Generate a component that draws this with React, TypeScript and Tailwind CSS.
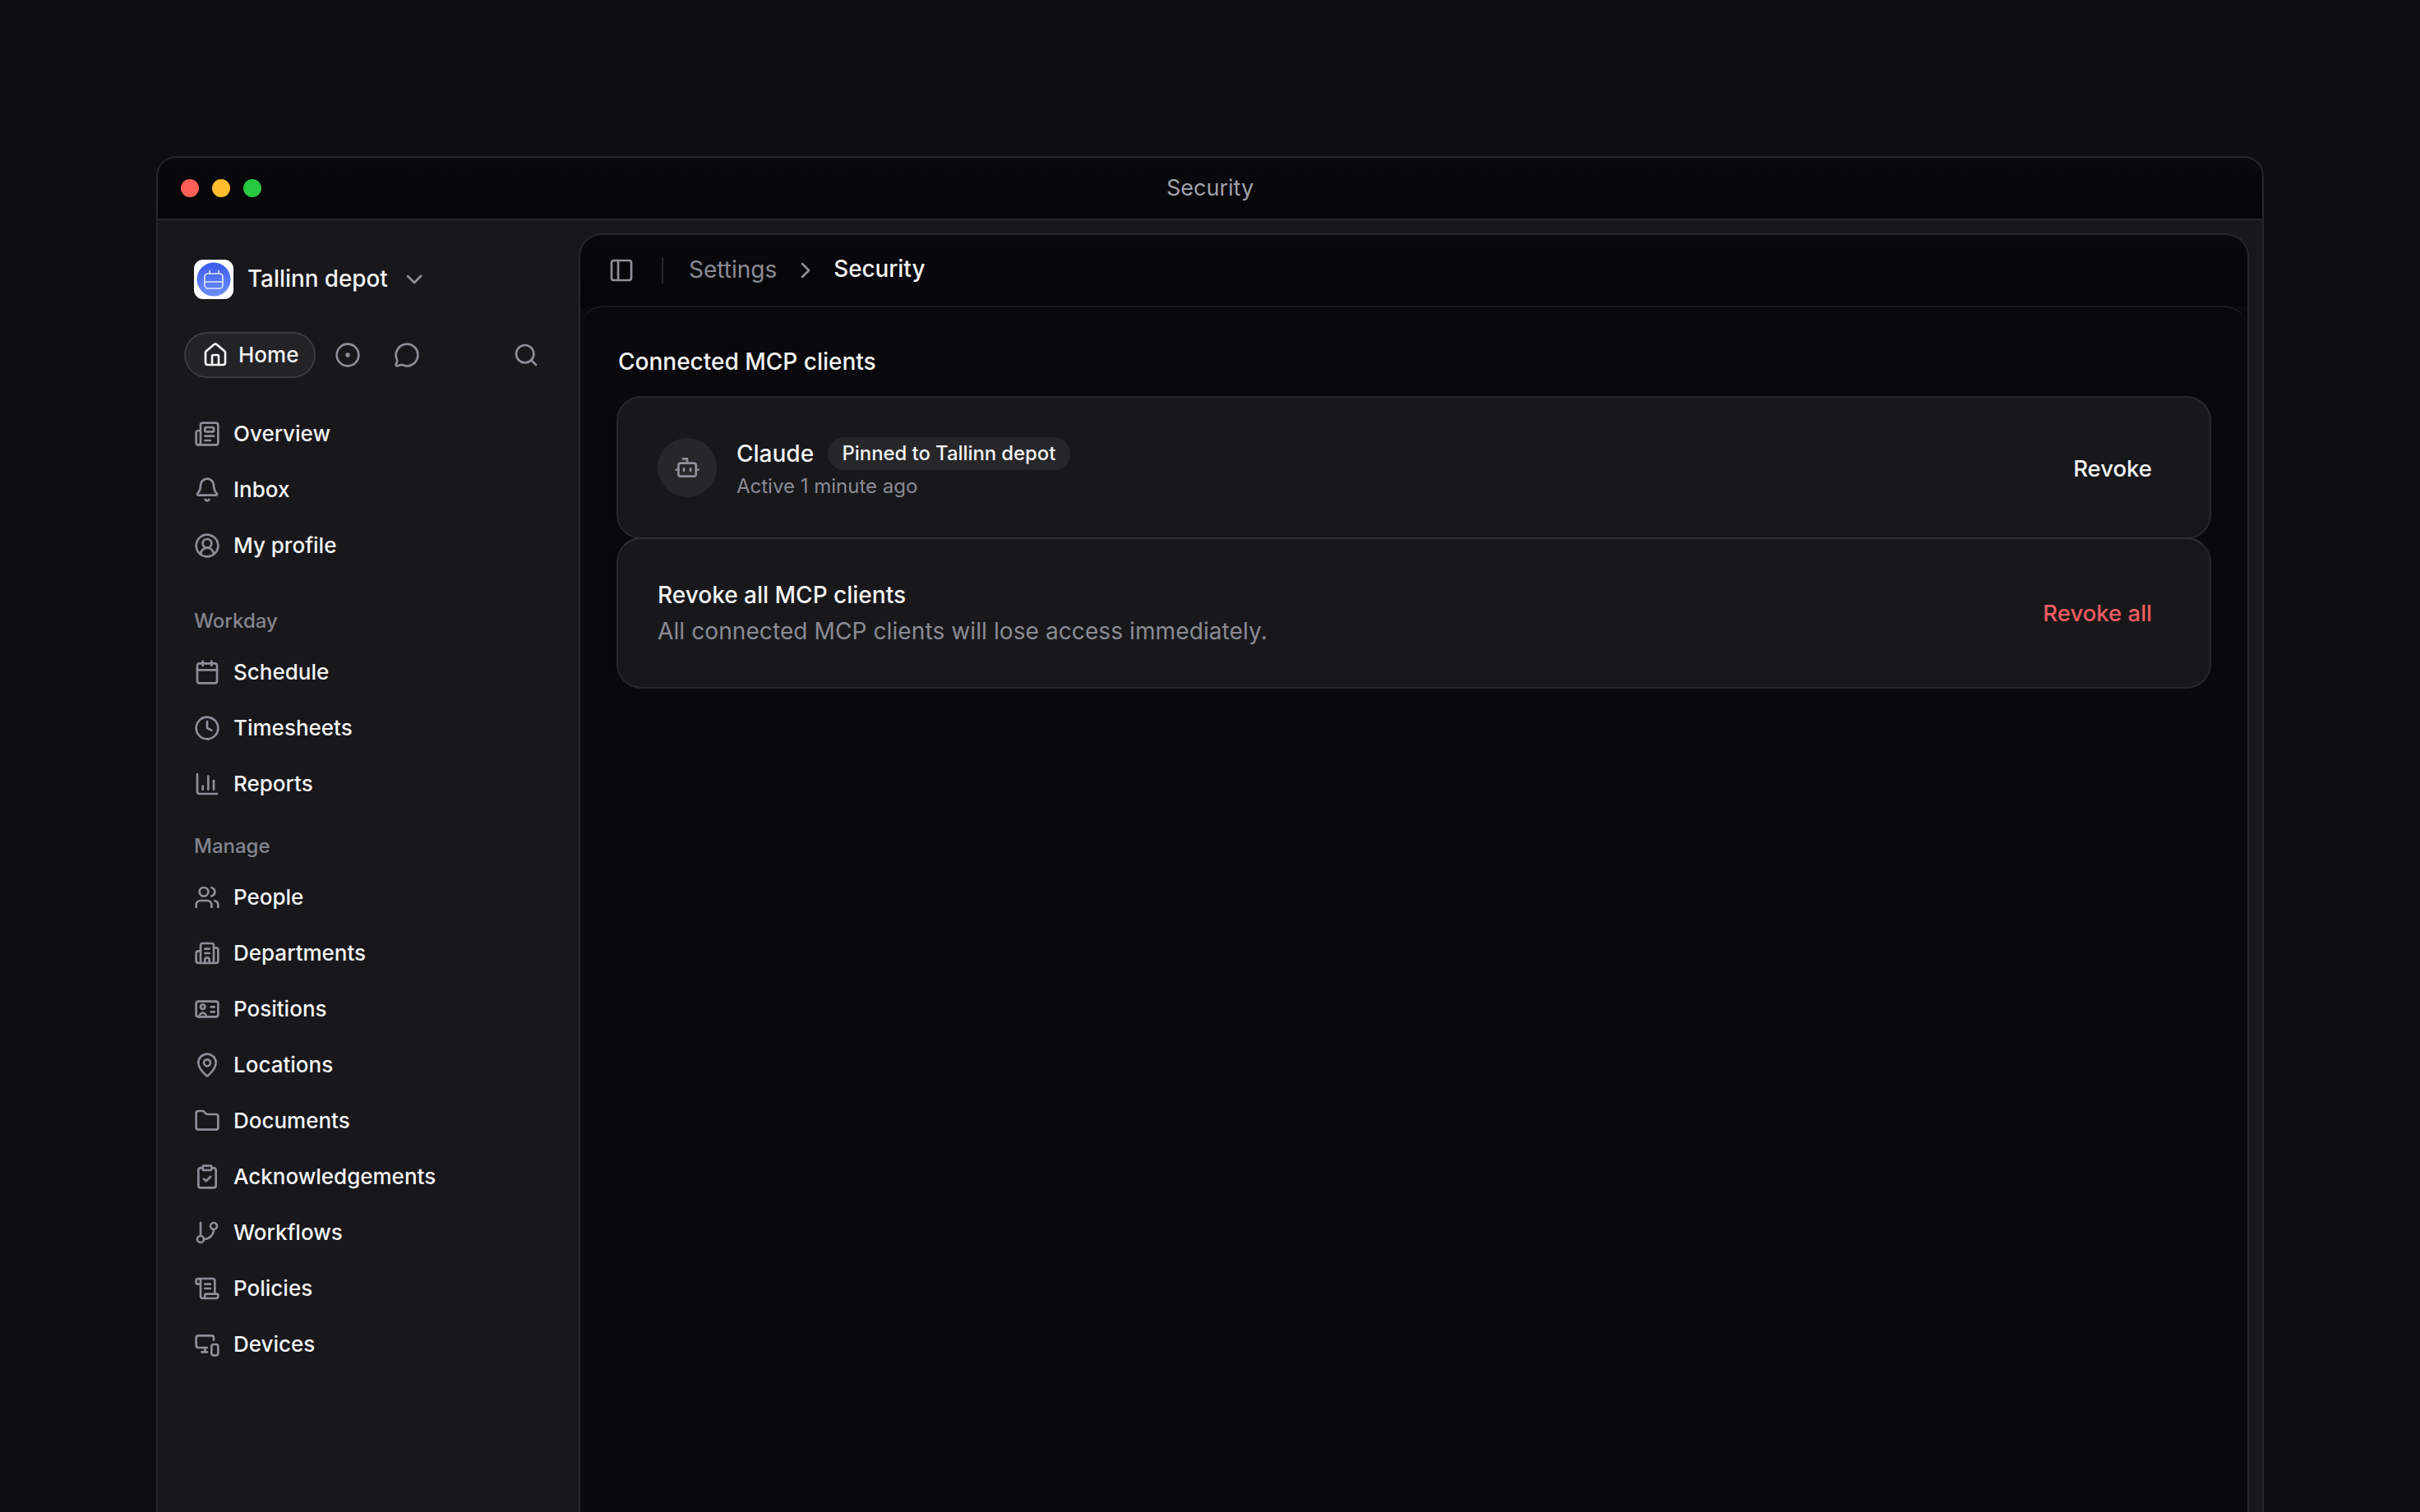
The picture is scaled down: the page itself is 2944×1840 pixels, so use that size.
import React from "react";
import {
  Newspaper, Bell, CircleUserRound, Calendar, Clock, ChartColumn, Users, Building2, MapPin, Folder,
  ClipboardCheck, GitBranch, ScrollText, MonitorSmartphone, House, CircleDot, MessageCircle, Search, PanelLeft,
  ChevronDown, ChevronRight, Bot,
} from "lucide-react";

type Item = { label: string; Icon: React.ComponentType<{ className?: string; strokeWidth?: number }> };

function PositionCard({ className }: { className?: string }) {
  return (
    <svg viewBox="0 0 24 24" fill="none" stroke="currentColor" strokeWidth="2" strokeLinecap="round" strokeLinejoin="round" className={className}>
      <rect x="2" y="5" width="20" height="14" rx="2" />
      <circle cx="8" cy="10" r="2" />
      <path d="M5 19v-.5a3 3 0 0 1 3-3a3 3 0 0 1 3 3v.5" />
      <path d="M15.5 10h3" />
      <path d="M15.5 14.5h3" />
    </svg>
  );
}

const top: Item[] = [
  { label: "Overview", Icon: Newspaper },
  { label: "Inbox", Icon: Bell },
  { label: "My profile", Icon: CircleUserRound },
];
const workday: Item[] = [
  { label: "Schedule", Icon: Calendar },
  { label: "Timesheets", Icon: Clock },
  { label: "Reports", Icon: ChartColumn },
];
const manage: Item[] = [
  { label: "People", Icon: Users },
  { label: "Departments", Icon: Building2 },
  { label: "Positions", Icon: PositionCard },
  { label: "Locations", Icon: MapPin },
  { label: "Documents", Icon: Folder },
  { label: "Acknowledgements", Icon: ClipboardCheck },
  { label: "Workflows", Icon: GitBranch },
  { label: "Policies", Icon: ScrollText },
  { label: "Devices", Icon: MonitorSmartphone },
];

function NavRow({ item }: { item: Item }) {
  const { Icon, label } = item;
  return (
    <div className="flex h-[68px] items-center gap-[16px] pl-[44px]">
      <Icon className="h-[32px] w-[32px] text-[#8e8e97]" />
      <span className="pb-[2px] text-[26px] font-medium text-[#f4f4f5]">{label}</span>
    </div>
  );
}

function Logo() {
  return (
    <svg viewBox="0 0 48 48" className="h-[48px] w-[48px] shrink-0">
      <defs>
        <linearGradient id="logoGrad" x1="0" y1="0" x2="0" y2="1">
          <stop offset="0" stopColor="#3b5bea" />
          <stop offset="1" stopColor="#6d8ffb" />
        </linearGradient>
      </defs>
      <rect width="48" height="48" rx="11" fill="#ffffff" />
      <circle cx="24" cy="24" r="20.5" fill="url(#logoGrad)" />
      <rect x="13" y="17" width="22" height="18" rx="4" fill="none" stroke="#e4e9ff" strokeWidth="1.6" />
      <path d="M13 27h22M19 13v4M30 13v4" fill="none" stroke="#e4e9ff" strokeWidth="1.6" />
    </svg>
  );
}

export default function App() {
  return (
    <div className="h-screen overflow-hidden bg-[#0e0e10] px-[190px] pt-[190px] font-['Inter',sans-serif] text-[#f4f4f5]">
      <div className="flex h-[1720px] flex-col overflow-hidden rounded-[24px] border-2 border-[#27272a] bg-[#18181b]">
        <div className="relative flex h-[76px] shrink-0 items-center gap-[16px] border-b-2 border-[#27272a] bg-gradient-to-b from-[#0a0a0c] to-[#060608] pl-[28px]">
          <span className="h-[22px] w-[22px] rounded-full bg-[#ff5f57]" />
          <span className="h-[22px] w-[22px] rounded-full bg-[#febc2e]" />
          <span className="h-[22px] w-[22px] rounded-full bg-[#28c840]" />
          <span className="absolute inset-x-0 text-center text-[27px] text-[#a1a1aa]">Security</span>
        </div>
        <div className="flex min-h-0 flex-1 pr-[16px]">
          <aside className="w-[512px] shrink-0">
            <div className="mt-[48px] flex h-[48px] items-center pl-[44px]">
              <Logo />
              <span className="ml-[17px] text-[27.8px] font-medium text-[#f4f4f5]">Tallinn depot</span>
              <ChevronDown className="ml-[16px] h-[32px] w-[32px] text-[#8e8e97]" />
            </div>
            <div className="mt-[40px] flex h-[56px] items-center pl-[32px]">
              <div className="flex h-[56px] w-[160px] items-center gap-[12px] rounded-full border-2 border-[#3a3a3f] bg-[#232326] pl-[20px]">
                <House className="h-[32px] w-[32px] text-[#f4f4f5]" />
                <span className="pb-[2px] text-[26px] font-medium">Home</span>
              </div>
              <CircleDot className="ml-[23px] h-[32px] w-[32px] text-[#8e8e97]" />
              <MessageCircle className="ml-[40px] h-[32px] w-[32px] text-[#8e8e97]" />
              <Search className="ml-[113px] h-[32px] w-[32px] text-[#8e8e97]" />
            </div>
            <nav className="mt-[34px]">
              {top.map((i) => <NavRow key={i.label} item={i} />)}
              <div className="mb-[8px] mt-[38px] flex h-[40px] items-center pl-[44px] text-[24px] font-medium text-[#85858e]">Workday</div>
              {workday.map((i) => <NavRow key={i.label} item={i} />)}
              <div className="mb-[8px] mt-[22px] flex h-[40px] items-center pl-[44px] text-[24px] font-medium text-[#85858e]">Manage</div>
              {manage.map((i) => <NavRow key={i.label} item={i} />)}
            </nav>
          </aside>
          <main className="mt-[16px] flex min-w-0 flex-1 flex-col rounded-t-[28px] border-x-2 border-t-2 border-[#27272a] bg-[#09090b]">
            <div className="flex h-[86px] shrink-0 items-center rounded-t-[28px] bg-gradient-to-b from-[#0a0a0c] to-[#050507] pl-[34px]">
              <PanelLeft className="h-[32px] w-[32px] text-[#8e8e97]" />
              <span className="ml-[33px] h-[32px] w-[2px] bg-[#27272a]" />
              <span className="ml-[31px] pb-[2px] text-[28px] text-[#8b8b94]">Settings</span>
              <ChevronRight className="ml-[19px] h-[32px] w-[32px] text-[#8e8e97]" />
              <span className="ml-[18px] pb-[2px] text-[27.8px] font-medium text-[#f4f4f5]">Security</span>
            </div>
            <div className="flex-1 rounded-t-[28px] border-t-2 border-[#1b1b1e] bg-[#09090b] px-[44px] pt-[48px]">
              <h2 className="h-[36px] pl-[2px] text-[28px] font-medium leading-[36px]">Connected MCP clients</h2>
              <div className="mt-[24px] flex h-[174px] items-center rounded-[30px] border-2 border-[#27272a] bg-[#18181b] pl-[48px] pr-[70px]">
                <div className="flex h-[72px] w-[72px] shrink-0 items-center justify-center rounded-full bg-[#27272a]">
                  <Bot className="h-[32px] w-[32px] text-[#8e8e97]" />
                </div>
                <div className="ml-[24px] flex-1 pt-[6px]">
                  <div className="flex items-center">
                    <span className="text-[28px] font-medium leading-[40px]">Claude</span>
                    <span className="ml-[17px] rounded-full bg-[#27272a] px-[17.5px] text-[23.8px] font-medium leading-[40px]">Pinned to Tallinn depot</span>
                  </div>
                  <div className="text-[24px] leading-[40px] text-[#8b8b94]">Active 1 minute ago</div>
                </div>
                <span className="pt-[3px] text-[27.5px] font-medium">Revoke</span>
              </div>
              <div className="-mt-[2px] flex h-[184px] items-center justify-between rounded-[30px] border-2 border-[#27272a] border-t-[#303033] bg-[#18181b] pl-[48px] pr-[70px]">
                <div>
                  <div className="text-[28px] font-medium leading-[44px]">Revoke all MCP clients</div>
                  <div className="text-[28px] leading-[44px] tracking-[0.1px] text-[#8b8b94]">All connected MCP clients will lose access immediately.</div>
                </div>
                <span className="pt-[1px] text-[27.5px] font-medium text-[#f25c60]">Revoke all</span>
              </div>
            </div>
          </main>
        </div>
      </div>
    </div>
  );
}
